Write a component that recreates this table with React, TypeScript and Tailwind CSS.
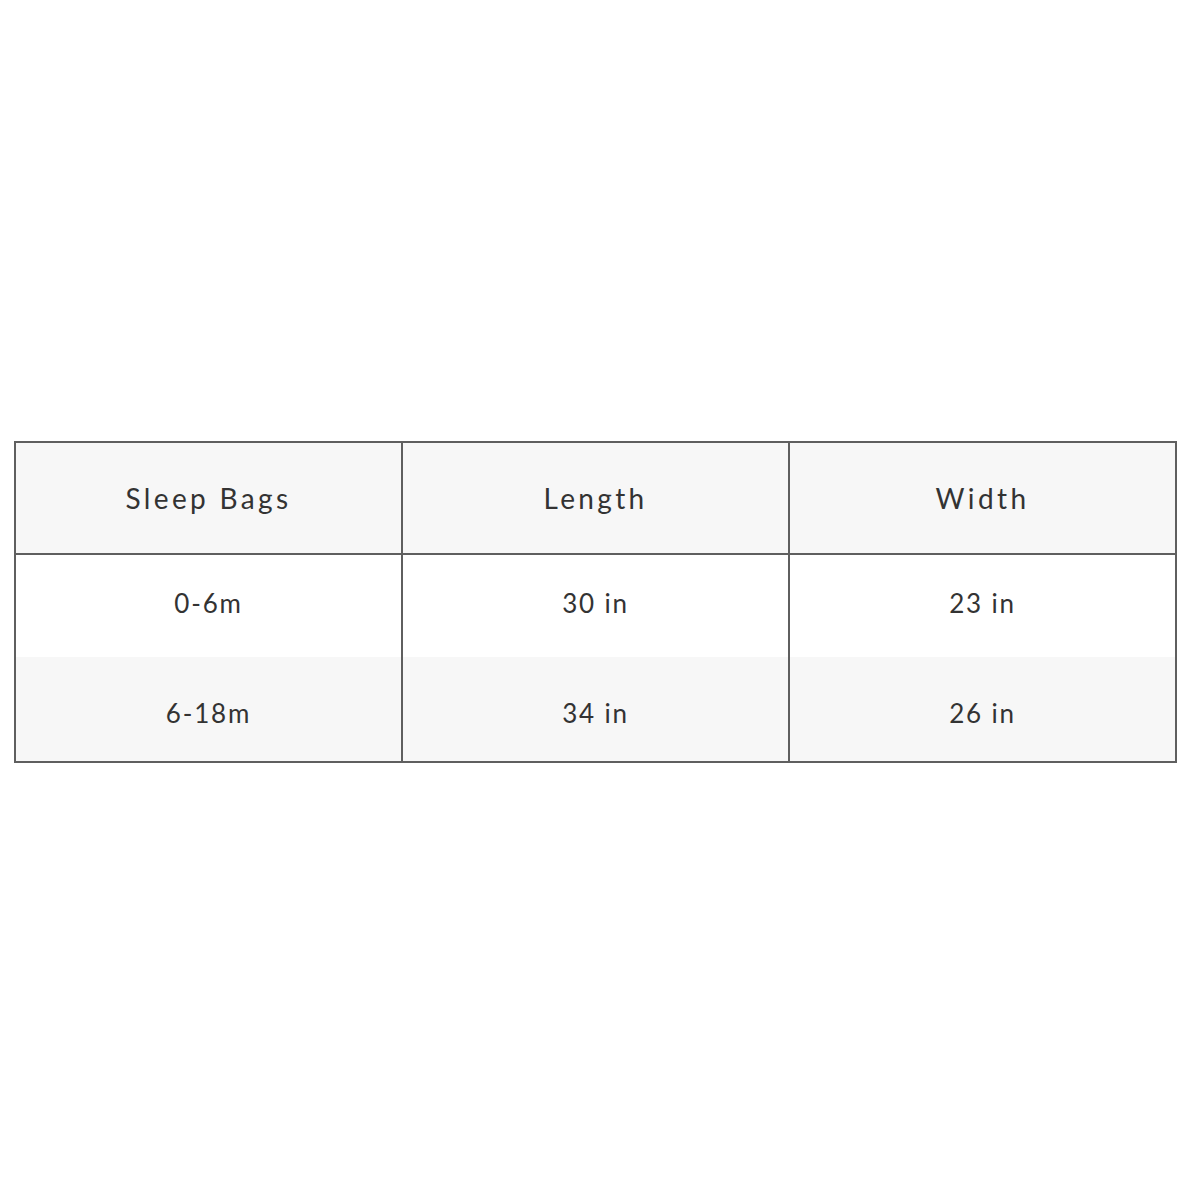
import React from "react";

export default function App() {
  const rows = [
    ["0-6m", "30 in", "23 in"],
    ["6-18m", "34 in", "26 in"],
  ];
  return (
    <div className="w-[1200px] h-[1200px] bg-white flex flex-col" style={{ fontFamily: "Lato, 'Noto Sans', sans-serif" }}>
      <div className="pt-[441px] pl-[14px]">
        <table className="w-[1163px] table-fixed border-collapse text-[#333333]">
          <thead>
            <tr className="h-[112px] bg-[#f7f7f7]">
              {["Sleep Bags", "Length", "Width"].map((h) => (
                <th key={h} className="border-2 border-[#5f5f5f] font-normal text-[28px] tracking-[0.12em] text-center align-middle">
                  {h}
                </th>
              ))}
            </tr>
          </thead>
          <tbody>
            {rows.map((r, i) => (
              <tr key={i} className={i === 0 ? "h-[103px] bg-white" : "h-[105px] bg-[#f7f7f7]"}>
                {r.map((c, j) => (
                  <td
                    key={j}
                    className={`border-x-2 border-[#5f5f5f] text-[26px] tracking-[0.07em] text-center align-middle ${i === 1 ? "border-b-2 pt-[8px]" : "pb-[5px]"}`}
                  >
                    {c}
                  </td>
                ))}
              </tr>
            ))}
          </tbody>
        </table>
      </div>
    </div>
  );
}
